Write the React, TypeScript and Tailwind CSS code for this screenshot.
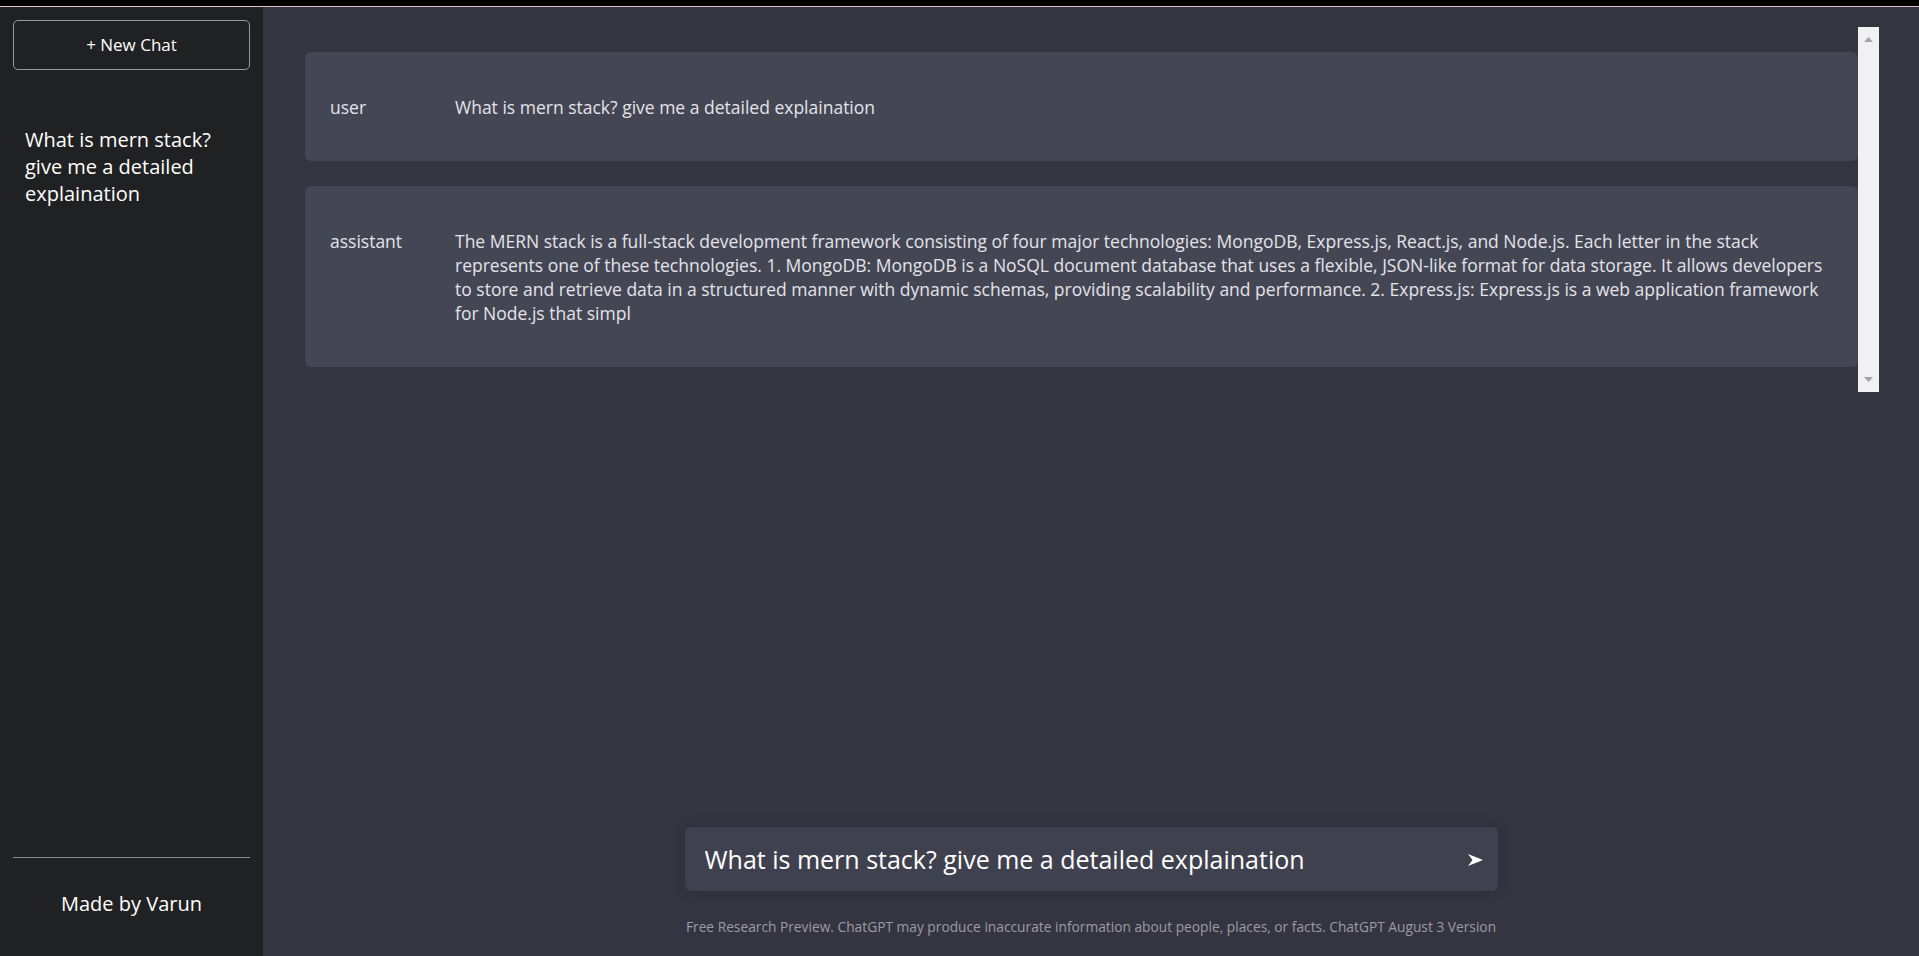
import { useState } from 'react';

const messages = [
    {
        role: 'user',
        content: 'What is mern stack? give me a detailed explaination',
    },
    {
        role: 'assistant',
        content:
            'The MERN stack is a full-stack development framework consisting of four major technologies: MongoDB, Express.js, React.js, and Node.js. Each letter in the stack represents one of these technologies. 1. MongoDB: MongoDB is a NoSQL document database that uses a flexible, JSON-like format for data storage. It allows developers to store and retrieve data in a structured manner with dynamic schemas, providing scalability and performance. 2. Express.js: Express.js is a web application framework for Node.js that simpl',
    },
];

const history = ['What is mern stack? give me a detailed explaination'];

export default function App() {
    const [value, setValue] = useState(
        'What is mern stack? give me a detailed explaination'
    );

    return (
        <div className="flex flex-col h-[956px] w-full font-['Open_Sans',sans-serif] overflow-hidden">
            {/* window strip */}
            <div className="h-[7px] shrink-0 bg-black border-b border-[#e2c3cc]"></div>

            <div className="flex flex-1 min-h-0">
                {/* SIDEBAR */}
                <section className="w-[263px] shrink-0 bg-[#202123] flex flex-col justify-between px-[13px]">
                    <div className="pt-[13px]">
                        <button className="w-full h-[50px] border border-[#9a9a9a] rounded-[5px] text-white text-[17px]">
                            + New Chat
                        </button>
                        <ul className="mt-[56px] px-[12px]">
                            {history.map((item, index) => (
                                <li
                                    key={index}
                                    className="text-white text-[20px] leading-[27px]"
                                >
                                    {item}
                                </li>
                            ))}
                        </ul>
                    </div>
                    <nav className="border-t border-[#8a8a8a] pt-[32px] pb-[39px]">
                        <p className="text-white text-[20px] leading-[27px] text-center">
                            Made by Varun
                        </p>
                    </nav>
                </section>

                {/* MAIN */}
                <section className="flex-1 bg-[#343541] flex flex-col justify-between">
                    <div className="pt-[20px] pl-[42px] pr-[40px]">
                        <div className="flex h-[365px]">
                            <ul className="flex-1 flex flex-col gap-[25px] py-[25px]">
                                {messages.map((msg, index) => (
                                    <li
                                        key={index}
                                        className="flex items-start bg-[#444654] rounded-[6px] py-[42.5px] px-[25px] text-[#e3e3e9] text-[17.5px] leading-[24px]"
                                    >
                                        <p className="w-[125px] shrink-0">{msg.role}</p>
                                        <p className="flex-1">{msg.content}</p>
                                    </li>
                                ))}
                            </ul>
                            {/* scroll track */}
                            <div className="w-[21px] shrink-0 bg-[#f1f1f1] flex flex-col items-center justify-between py-[10px]">
                                <svg width="9" height="5" viewBox="0 0 9 5">
                                    <polygon points="4.5,0 9,5 0,5" fill="#a3a3a3" />
                                </svg>
                                <svg width="9" height="5" viewBox="0 0 9 5">
                                    <polygon points="0,0 9,0 4.5,5" fill="#a3a3a3" />
                                </svg>
                            </div>
                        </div>
                    </div>

                    {/* BOTTOM INPUT */}
                    <div className="flex flex-col items-center pb-[20px]">
                        <div className="w-[813px] h-[64px] rounded-[6px] bg-[#40414f] flex items-center pl-[20px] pr-[15px] shadow-[0_0_15px_rgba(0,0,0,0.12)]">
                            <input
                                value={value}
                                onChange={(e) => setValue(e.target.value)}
                                className="flex-1 bg-transparent outline-none text-white text-[25px] pt-[2px]"
                            />
                            <svg width="15" height="12" viewBox="0 0 15 12" className="mt-[1px]">
                                <polygon points="0,0 15,6 0,12 4.5,6" fill="#ffffff" />
                            </svg>
                        </div>
                        <p className="mt-[26px] text-[#9b9ba6] text-[13.75px] leading-[19px]">
                            Free Research Preview. ChatGPT may produce inaccurate
                            information about people, places, or facts. ChatGPT
                            August 3 Version
                        </p>
                    </div>
                </section>
            </div>
        </div>
    );
}
